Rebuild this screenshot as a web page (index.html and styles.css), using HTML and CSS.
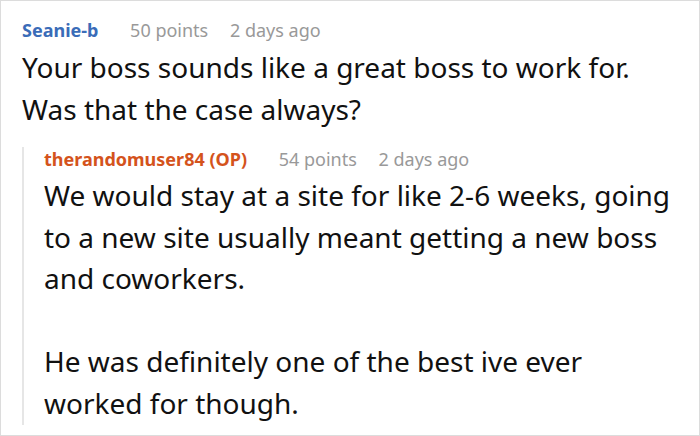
FILE: index.html
```html
<!DOCTYPE html>
<html lang="en">

<head>
    <meta charset="UTF-8">
    <meta name="viewport" content="width=device-width, initial-scale=1.0">
    <title>Comments</title>
    <link rel="stylesheet" href="styles.css">
</head>

<body>
    <div class="thread">
        <div class="comment">
            <div class="meta">
                <span class="author">Seanie-b</span>
                <span class="points">50 points</span>
                <span class="time">2 days ago</span>
            </div>
            <div class="text">Your boss sounds like a great boss to work for. Was that the case always?</div>

            <div class="reply">
                <div class="meta">
                    <span class="author op">therandomuser84 (OP)</span>
                    <span class="points">54 points</span>
                    <span class="time">2 days ago</span>
                </div>
                <div class="text">
                    We would stay at a site for like 2-6 weeks, going to a new site usually meant getting a new boss and coworkers.<br><br>
                    He was definitely one of the best ive ever worked for though.
                </div>
            </div>
        </div>
    </div>
</body>

</html>
```

FILE: styles.css
```css
body {
    margin: 0;
    padding: 0;
    background-color: #fff;
    font-family: "Noto Sans", "Open Sans", sans-serif;
    color: #111;
}

.thread {
    box-sizing: border-box;
    width: 700px;
    height: 436px;
    border: 1px solid #dcdcdc;
    overflow: hidden;
}

.comment {
    padding: 17px 0 0 21px;
}

.meta {
    font-size: 18px;
    line-height: 24px;
    white-space: nowrap;
}

.author {
    font-weight: bold;
    color: #3a6cb8;
    margin-right: 27px;
}

.author.op {
    color: #d4531c;
}

.points {
    color: #999;
    margin-right: 17px;
}

.time {
    color: #999;
}

.text {
    margin-top: 4px;
    font-size: 28px;
    line-height: 42px;
    width: 660px;
}

.reply {
    margin-top: 27px;
    border-left: 2px solid #e6e6e6;
    padding-left: 20px;
}

.reply .meta {
    margin-top: -10px;
}

.reply .text {
    width: 630px;
    line-height: 41.6px;
}
```
